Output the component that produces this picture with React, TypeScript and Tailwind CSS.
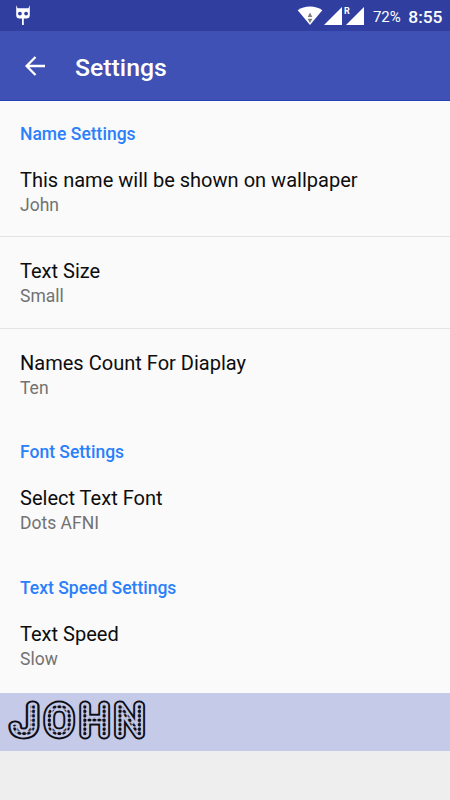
import React from "react";

type Preference = {
  title: string;
  summary: string;
};

type Category = {
  name: string;
  items: Preference[];
};

const categories: Category[] = [
  {
    name: "Name Settings",
    items: [
      { title: "This name will be shown on wallpaper", summary: "John" },
      { title: "Text Size", summary: "Small" },
      { title: "Names Count For Diaplay", summary: "Ten" },
    ],
  },
  {
    name: "Font Settings",
    items: [{ title: "Select Text Font", summary: "Dots AFNI" }],
  },
  {
    name: "Text Speed Settings",
    items: [{ title: "Text Speed", summary: "Slow" }],
  },
];

const RobotIcon = () => (
  <svg width="16" height="20" viewBox="0 0 16 20" fill="#fff">
    <path d="M1.2 0.3 L2.6 3.2 H13.4 L14.8 0.3 V10 Q14.8 13.6 11.5 13.6 H4.5 Q1.2 13.6 1.2 10 Z" />
    <circle cx="4.9" cy="8.6" r="1.9" fill="#303f9f" />
    <circle cx="11.1" cy="8.6" r="1.9" fill="#303f9f" />
    <path d="M7 13 H8.8 V20 H7 Z" />
  </svg>
);

const WifiIcon = () => (
  <svg width="26" height="20" viewBox="0 0 26 20">
    <path d="M13 19 L0.7 4.3 Q6 0.6 13 0.6 Q20 0.6 25.3 4.3 Z" fill="#fff" />
    <path d="M13 6.5 L15.3 10.9 H10.7 Z M13 17.2 L10.7 12.8 H15.3 Z" fill="#7d7d7d" />
  </svg>
);

const SignalIcon = () => (
  <svg width="18" height="18" viewBox="0 0 18 18">
    <path d="M18 0 V18 H0 Z" fill="#fff" />
  </svg>
);

const StatusBar = () => (
  <div className="flex h-[31px] items-start bg-[#303f9f] text-white">
    <div className="pl-[15px] pt-[5px]">
      <RobotIcon />
    </div>
    <div className="ml-auto flex items-start pr-[7.5px]">
      <div className="pt-[6px]">
        <WifiIcon />
      </div>
      <div className="ml-px pt-[7px]">
        <SignalIcon />
      </div>
      <div className="relative ml-[3.5px] pt-[7px]">
        <SignalIcon />
        <span className="absolute -left-[2px] top-[6px] text-[9px] font-bold leading-[10px]">R</span>
      </div>
      <span className="ml-[9px] pt-[7px] text-[15px] leading-5">72%</span>
      <span className="ml-[7.5px] pt-[7px] text-[17.4px] font-medium leading-5">8:55</span>
    </div>
  </div>
);

const AppBar = () => (
  <header className="flex h-[70px] items-center border-b border-[#2441b4] bg-[#3f51b5] text-white">
    <svg width="20" height="20" viewBox="0 0 20 20" className="ml-[25px]" fill="none" stroke="#fff" strokeWidth="2.3">
      <path d="M20 10 H2 M10.5 1 L1.6 10 L10.5 19" />
    </svg>
    <h1 className="ml-[30px] pt-[5px] text-[24.8px] font-medium leading-8">Settings</h1>
  </header>
);

const PreferenceRow = ({ title, summary }: Preference) => (
  <div>
    <div className="h-[90.4px] px-5 pt-[21.1px]">
      <div className="text-[20.05px] leading-[26px] text-[#0d0d0d]">{title}</div>
      <div className="text-[17.5px] leading-[24px] text-[#727272]">{summary}</div>
    </div>
  </div>
);

const PreferenceList = () => (
  <main className="h-[591.5px] bg-[#fafafa]">
    {categories.map((category) => (
      <section key={category.name} className="pb-[0.3px]">
        <h2 className="h-[44.9px] px-5 pt-[20.7px] text-[17.5px] font-medium leading-6 text-[#2a80fb]">
          {category.name}
        </h2>
        <div className="divide-y divide-[#e3e3e3]">
          {category.items.map((item) => (
            <PreferenceRow key={item.title} {...item} />
          ))}
        </div>
      </section>
    ))}
  </main>
);

// stem is where the left column of dots sits, pitch the gap between columns
const letters = [
  { char: "J", x: 12.4, stretch: 1.157, stem: 14.2, pitch: 4.95 },
  { char: "O", x: 46.1, stretch: 1, stem: 49.4, pitch: 4.97 },
  { char: "H", x: 80.7, stretch: 1, stem: 84.6, pitch: 4.88 },
  { char: "N", x: 115.4, stretch: 1, stem: 120, pitch: 4.9 },
];

const NamePreview = () => (
  <div className="h-[58.5px] bg-[#c5cae9]">
    <svg width="160" height="58" fontSize="39.5" fontWeight="100" strokeLinejoin="round">
      {letters.map(({ char, x, stretch, stem, pitch }) => {
        const dots = `dots-${char}`;
        const layers = [
          { paint: "#0e0e14", width: 10.8 },
          { paint: "#c5cae9", width: 6.8 },
          { paint: `url(#${dots})`, width: 2.6 },
        ];
        return (
          <g key={char} transform={`translate(${x} 41) scale(${stretch} 1)`}>
            <pattern
              id={dots}
              x={(stem - x - pitch / 2) / stretch}
              y={-29.3}
              width={pitch / stretch}
              height="4.45"
              patternUnits="userSpaceOnUse"
            >
              <ellipse cx={pitch / stretch / 2} cy="2.22" rx={1.9 / stretch} ry="1.7" fill="#0e0e14" />
            </pattern>
            {layers.map((layer) => (
              <text key={layer.paint} fill={layer.paint} stroke={layer.paint} strokeWidth={layer.width}>
                {char}
              </text>
            ))}
          </g>
        );
      })}
    </svg>
  </div>
);

const App: React.FC = () => {
  return (
    <div className="flex h-[800px] w-[450px] flex-col overflow-hidden bg-[#eeeeee] font-['Roboto',sans-serif]">
      <StatusBar />
      <AppBar />
      <PreferenceList />
      <NamePreview />
    </div>
  );
};

export default App;
